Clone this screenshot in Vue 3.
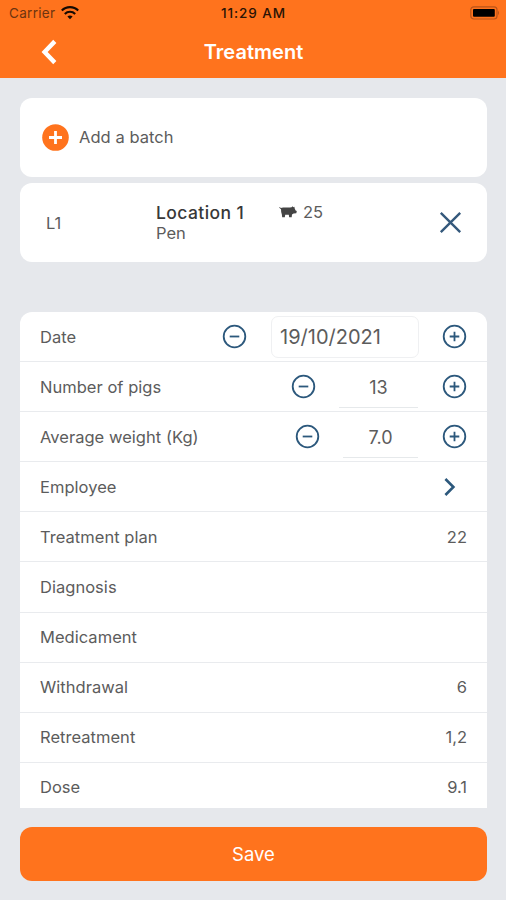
<template>
  <div class="screen">
    <header class="header">
      <div class="status">
        <div class="carrier">
          <span>Carrier</span>
          <svg class="wifi" width="18" height="14" viewBox="0 0 18 14">
            <path d="M0.8 4.6 A11.5 11.5 0 0 1 17.2 4.6" />
            <path d="M3.8 7.9 A7.3 7.3 0 0 1 14.2 7.9" />
            <path class="dot" d="M6.4 10.5 A4 4 0 0 1 11.6 10.5 L9 13.2 Z" />
          </svg>
        </div>
        <span class="time">11:29 AM</span>
        <svg class="battery" width="30" height="14" viewBox="0 0 30 14">
          <rect class="shell" x="0.8" y="0.8" width="26.2" height="12.2" rx="3" />
          <rect x="3" y="3" width="21.8" height="7.8" rx="1" />
          <path class="cap" d="M28 4.6 Q30 6.9 28 9.2 Z" />
        </svg>
      </div>
      <div class="navbar">
        <button class="back">
          <svg width="16" height="26" viewBox="0 0 16 26">
            <path d="M13.8 2.4 L3.6 13 L13.8 23.6" />
          </svg>
        </button>
        <h1>Treatment</h1>
      </div>
    </header>

    <main class="content">
      <div class="card add">
        <svg width="27" height="27" viewBox="0 0 27 27">
          <circle cx="13.5" cy="13.5" r="13.3" />
          <path d="M13.5 7 V20 M7 13.5 H20" />
        </svg>
        <span>Add a batch</span>
      </div>

      <div class="card batch">
        <span class="code">{{ batch.code }}</span>
        <div class="location">
          <strong>{{ batch.location }}</strong>
          <span>{{ batch.type }}</span>
        </div>
        <div class="count">
          <svg width="18" height="12" viewBox="0 0 18 12">
            <path
              d="M0.4 1 L2 2 Q3 1.3 4.5 1.4 H11 L12.6 1.2 L13.6 0.2 L14.4 1.3 L15.4 0.8 L15.7 2.4 L16.6 4.4 L17.8 5 L17.3 7.2 L14.6 7.6 L13 8.6 L12.7 11.2 H10.2 L9.8 8.8 H6.2 L5.8 11.2 H3.2 L2.8 8.2 Q2 6.4 2 3.2 L0.3 1.8 Z"
            />
          </svg>
          <span>{{ batch.pigs }}</span>
        </div>
        <button class="remove">
          <svg width="23" height="23" viewBox="0 0 23 23">
            <path d="M1.8 1.8 L21.2 21.2 M21.2 1.8 L1.8 21.2" />
          </svg>
        </button>
      </div>

      <div class="form">
        <div v-for="row in rows" :key="row.label" class="row">
          <span class="label">{{ row.label }}</span>
          <template v-if="row.kind">
            <button class="step" @click="step(row, -1)">
              <svg width="25" height="25" viewBox="0 0 25 25">
                <circle cx="12.5" cy="12.5" r="10.8" />
                <path d="M7.7 12.5 H17.3" />
              </svg>
            </button>
            <span class="field" :class="row.kind">{{ row.value }}</span>
            <button class="step" @click="step(row, 1)">
              <svg width="25" height="25" viewBox="0 0 25 25">
                <circle cx="12.5" cy="12.5" r="10.8" />
                <path d="M7.7 12.5 H17.3 M12.5 7.7 V17.3" />
              </svg>
            </button>
          </template>
          <svg v-else-if="row.link" class="chevron" width="13" height="20" viewBox="0 0 13 20">
            <path d="M2.4 2 L10.4 10 L2.4 18" />
          </svg>
          <span v-else class="value">{{ row.value }}</span>
        </div>
      </div>
    </main>

    <button class="save">Save</button>
  </div>
</template>

<script setup>
import { ref } from 'vue'

const batch = { code: 'L1', location: 'Location 1', type: 'Pen', pigs: 25 }

const rows = ref([
  { label: 'Date', value: '19/10/2021', kind: 'date' },
  { label: 'Number of pigs', value: '13', kind: 'number' },
  { label: 'Average weight (Kg)', value: '7.0', kind: 'weight' },
  { label: 'Employee', link: true },
  { label: 'Treatment plan', value: '22' },
  { label: 'Diagnosis', value: '' },
  { label: 'Medicament', value: '' },
  { label: 'Withdrawal', value: '6' },
  { label: 'Retreatment', value: '1,2' },
  { label: 'Dose', value: '9.1' },
])

const step = (row, delta) => {
  if (row.kind === 'number') {
    row.value = String(Number(row.value) + delta)
  } else if (row.kind === 'weight') {
    row.value = (Number(row.value) + delta * 0.1).toFixed(1)
  } else {
    const [d, m, y] = row.value.split('/').map(Number)
    const date = new Date(y, m - 1, d + delta)
    const pad = (n) => String(n).padStart(2, '0')
    row.value = `${pad(date.getDate())}/${pad(date.getMonth() + 1)}/${date.getFullYear()}`
  }
}
</script>

<style>
body {
  margin: 0;
  background: #e6e8ec;
}
</style>

<style scoped>
.screen {
  display: flex;
  flex-direction: column;
  box-sizing: border-box;
  height: 900px;
  overflow: hidden;
  background: #e6e8ec;
  color: #5c5c5c;
  font-family: Inter, 'Liberation Sans', sans-serif;
  font-size: 16.5px;
}

button {
  padding: 0;
  border: 0;
  background: none;
  font: inherit;
}

svg {
  display: block;
  flex: none;
}

.header {
  height: 78px;
  flex: none;
  background: #ff731d;
}

.status {
  display: grid;
  grid-template-columns: 1fr auto 1fr;
  align-items: center;
  height: 26px;
  padding: 0 6px 0 9px;
  color: #2a1405;
}

.carrier {
  display: flex;
  align-items: center;
  gap: 6px;
  font-size: 13.5px;
  letter-spacing: 0.3px;
  color: #6d3410;
}

.wifi {
  fill: none;
  stroke: #160a02;
  stroke-width: 2.1;
}

.wifi .dot {
  fill: #160a02;
  stroke: none;
}

.time {
  margin-right: 2px;
  font-size: 13.5px;
  font-weight: 500;
  letter-spacing: 0.95px;
}

.battery {
  justify-self: end;
  fill: #000;
}

.battery .shell {
  fill: none;
  stroke: #b9541a;
  stroke-width: 1.2;
}

.battery .cap {
  fill: #b9541a;
}

.navbar {
  display: grid;
  grid-template-columns: 1fr auto 1fr;
  align-items: center;
  height: 52px;
}

.back {
  justify-self: start;
  margin-left: 41px;
}

.back path {
  fill: none;
  stroke: #fff;
  stroke-width: 4.4;
}

h1 {
  margin: 0 0 0 1px;
  color: #fff;
  font-size: 20px;
  font-weight: 600;
  letter-spacing: 0.05px;
}

.content {
  height: 729.5px;
  flex: none;
  box-sizing: border-box;
  padding: 20px 19px 0 20px;
  overflow: hidden;
}

.card {
  display: flex;
  align-items: center;
  box-sizing: border-box;
  height: 79px;
  border-radius: 12px;
  background: #fff;
}

.add {
  gap: 10px;
  padding-left: 22px;
}

.add span {
  margin-top: -2px;
  letter-spacing: 0.05px;
}

.add circle {
  fill: #ff731d;
}

.add path {
  stroke: #fff;
  stroke-width: 2.8;
}

.batch {
  margin-top: 6px;
  padding: 0 25px 0 26px;
}

.code {
  width: 110px;
}

.location {
  display: flex;
  flex-direction: column;
  width: 123px;
  line-height: 21px;
}

.location strong {
  color: #383838;
  font-size: 17.5px;
  font-weight: 500;
  letter-spacing: 0.4px;
}

.count {
  display: flex;
  align-items: center;
  align-self: flex-start;
  gap: 6px;
  margin-top: 18px;
  line-height: 22px;
}

.count path {
  fill: #444;
}

.remove {
  margin-left: auto;
}

.remove path {
  stroke: #35597c;
  stroke-width: 2.4;
}

.form {
  margin-top: 50px;
  border-radius: 12px 12px 0 0;
  background: #fff;
}

.row {
  display: flex;
  align-items: center;
  box-sizing: border-box;
  height: 50.1px;
  padding: 0 20px;
  border-bottom: 1px solid #e9ebee;
}

.label {
  margin-right: auto;
  letter-spacing: 0.03px;
}

.step circle,
.step path {
  fill: none;
  stroke: #2c587c;
  stroke-width: 1.8;
}

.field {
  box-sizing: border-box;
  text-align: center;
  font-size: 18px;
}

.date {
  width: 148px;
  height: 42px;
  margin: 0 23.5px;
  padding-left: 8.5px;
  border: 1px solid #eff0f2;
  border-radius: 7px;
  line-height: 41px;
  text-align: left;
  font-size: 20px;
}

.number {
  width: 79px;
  height: 42px;
  margin: 0 24px 0 23px;
  border-bottom: 1px solid #e6e9eb;
  line-height: 43px;
}

.weight {
  width: 75px;
  height: 42px;
  margin: 0 24px 0 23px;
  border-bottom: 1px solid #e6e9eb;
  line-height: 43px;
}

.chevron {
  margin-right: 11px;
}

.chevron path {
  fill: none;
  stroke: #2c587c;
  stroke-width: 2.6;
}

.save {
  height: 54px;
  flex: none;
  margin: 19.5px 19px 0 20px;
  border-radius: 12px;
  background: #ff731d;
  color: #fff;
  font-size: 18.5px;
}
</style>
